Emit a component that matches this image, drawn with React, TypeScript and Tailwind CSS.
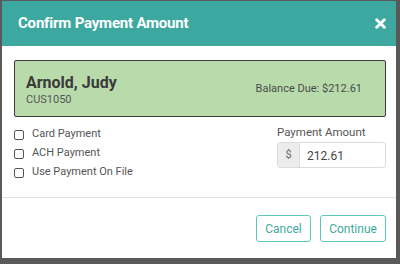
import React from "react";

const options = ["Card Payment", "ACH Payment", "Use Payment On File"];

const App: React.FC = () => {
  return (
    <div
      className="w-[400px] h-[264px] bg-[#595959] pt-[1px] pl-[2px] pr-[4px] pb-[6px]"
      style={{ fontFamily: "Roboto, 'Liberation Sans', sans-serif" }}
    >
      <div className="w-full h-full bg-white flex flex-col">
        <header className="h-[45px] shrink-0 bg-[#3da89f] flex items-center justify-between pl-[16px] pr-[10px]">
          <h1 className="text-[15px] font-bold text-white tracking-[-0.2px]">Confirm Payment Amount</h1>
          <svg width="11" height="11" viewBox="0 0 10 10">
            <path d="M1.5 1.5 L8.5 8.5 M8.5 1.5 L1.5 8.5" stroke="white" strokeWidth="2.6" strokeLinecap="round" />
          </svg>
        </header>

        <section className="flex-1 pl-[12px] pr-[10px] pt-[14px]">
          <div className="h-[57px] rounded-[2px] border border-[#3a3a3a] bg-[#b9dbab] flex items-center justify-between pl-[11px] pr-[23px]">
            <div className="flex flex-col pt-[2px]">
              <span className="text-[16px] font-bold text-[#3a3a3a] leading-[20px]">Arnold, Judy</span>
              <span className="text-[11px] text-[#555] leading-[14px]">CUS1050</span>
            </div>
            <span className="text-[11px] text-[#4a4a4a] pt-[2px]">Balance Due: $212.61</span>
          </div>

          <div className="flex justify-between mt-[8px]">
            <ul className="flex flex-col gap-[6px] pt-[3px]">
              {options.map((label) => (
                <li key={label} className="flex items-center gap-[8px] h-[13px]">
                  <span className="w-[10px] h-[10px] rounded-[2px] border border-[#555]" />
                  <span className="text-[11px] text-[#555]">{label}</span>
                </li>
              ))}
            </ul>
            <div className="w-[109px] flex flex-col">
              <span className="text-[11.5px] text-[#555] leading-[14px]">Payment Amount</span>
              <div className="mt-[3px] h-[26px] flex rounded-[3px] border border-[#dcdcdc] overflow-hidden">
                <span className="w-[22px] bg-[#ececec] border-r border-[#dcdcdc] flex items-center justify-center text-[11px] text-[#666]">
                  $
                </span>
                <span className="flex-1 pl-[7px] pt-[4px] text-[12px] text-[#444]">212.61</span>
              </div>
            </div>
          </div>
        </section>

        <footer className="h-[61px] shrink-0 border-t border-[#e3e3e3] flex items-start justify-end gap-[9px] pr-[10px] pt-[17px]">
          <button className="w-[55px] h-[27px] rounded-[3px] border-[1.5px] border-[#5ec6bb] text-[12px] text-[#3fa99f] bg-white">
            Cancel
          </button>
          <button className="w-[66px] h-[27px] rounded-[3px] border-[1.5px] border-[#5ec6bb] text-[12px] text-[#3fa99f] bg-white">
            Continue
          </button>
        </footer>
      </div>
    </div>
  );
};

export default App;
